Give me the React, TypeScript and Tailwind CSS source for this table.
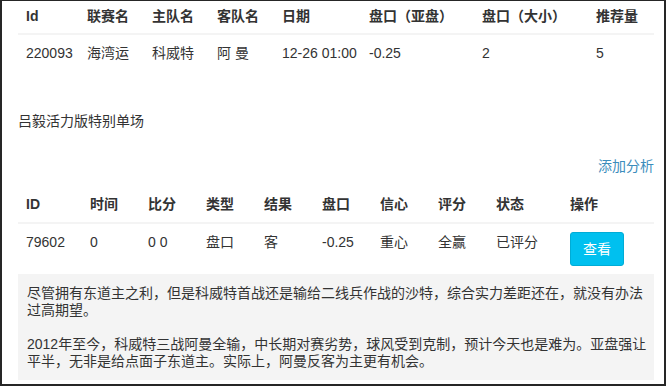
const font = {
  fontFamily: '"Liberation Sans", Arial, "Noto Sans CJK SC", sans-serif',
};

const matchCols = [
  { label: "Id", w: "w-[61px]" },
  { label: "联赛名", w: "w-[65px]" },
  { label: "主队名", w: "w-[65px]" },
  { label: "客队名", w: "w-[65px]" },
  { label: "日期", w: "w-[87px]" },
  { label: "盘口（亚盘）", w: "w-[113px]" },
  { label: "盘口（大小）", w: "w-[114px]" },
  { label: "推荐量", w: "w-[66px]" },
];

const matchRow = ["220093", "海湾运", "科威特", "阿 曼", "12-26 01:00", "-0.25", "2", "5"];

const analysisCols = [
  { label: "ID", w: "w-[64px]" },
  { label: "时间", w: "w-[58px]" },
  { label: "比分", w: "w-[58px]" },
  { label: "类型", w: "w-[58px]" },
  { label: "结果", w: "w-[58px]" },
  { label: "盘口", w: "w-[58px]" },
  { label: "信心", w: "w-[58px]" },
  { label: "评分", w: "w-[58px]" },
  { label: "状态", w: "w-[74px]" },
  { label: "操作", w: "w-[92px]" },
];

const analysisRow = ["79602", "0", "0 0", "盘口", "客", "-0.25", "重心", "全赢", "已评分"];

export default function App() {
  return (
    <div
      style={font}
      className="w-[666px] h-[386px] overflow-hidden bg-white text-[#333] text-[14px] leading-[20px] border-t border-l-2 border-r-2 border-b-2 border-[#262626] pl-[16px] pr-[10px]"
    >
      {/* 比赛信息 */}
      <table className="w-[636px] table-fixed border-collapse">
        <thead>
          <tr className="border-b-2 border-[#f4f4f4]">
            {matchCols.map((c) => (
              <th key={c.label} className={`${c.w} text-left font-bold pl-[8px] pt-[5px] pb-[7px] whitespace-nowrap`}>
                {c.label}
              </th>
            ))}
          </tr>
        </thead>
        <tbody>
          <tr>
            {matchRow.map((v, i) => (
              <td key={i} className="p-[8px] whitespace-nowrap">
                {v}
              </td>
            ))}
          </tr>
        </tbody>
      </table>

      <div className="mt-[40px]">吕毅活力版特别单场</div>

      <div className="mt-[25px] text-right">
        <a className="text-[#3c8dbc] cursor-pointer">添加分析</a>
      </div>

      {/* 分析列表 */}
      <table className="mt-[10px] w-[636px] table-fixed border-collapse">
        <thead>
          <tr className="border-b-2 border-[#f4f4f4]">
            {analysisCols.map((c) => (
              <th key={c.label} className={`${c.w} text-left font-bold p-[8px] whitespace-nowrap`}>
                {c.label}
              </th>
            ))}
          </tr>
        </thead>
        <tbody>
          <tr>
            {analysisRow.map((v, i) => (
              <td key={i} className="p-[8px] align-top whitespace-nowrap">
                {v}
              </td>
            ))}
            <td className="p-[8px]">
              <button className="bg-[#00c0ef] border border-[#00acd6] text-white rounded-[3px] px-[12px] py-[6px] leading-[20px]">
                查看
              </button>
            </td>
          </tr>
        </tbody>
      </table>

      <div className="bg-[#f4f4f4] pl-[9px] pr-[2px] pt-[11px] pb-[10px] leading-[17px]">
        <p>尽管拥有东道主之利，但是科威特首战还是输给二线兵作战的沙特，综合实力差距还在，就没有办法过高期望。</p>
        <p className="mt-[17px]">
          2012年至今，科威特三战阿曼全输，中长期对赛劣势，球风受到克制，预计今天也是难为。亚盘强让平半，无非是给点面子东道主。实际上，阿曼反客为主更有机会。
        </p>
      </div>
    </div>
  );
}
